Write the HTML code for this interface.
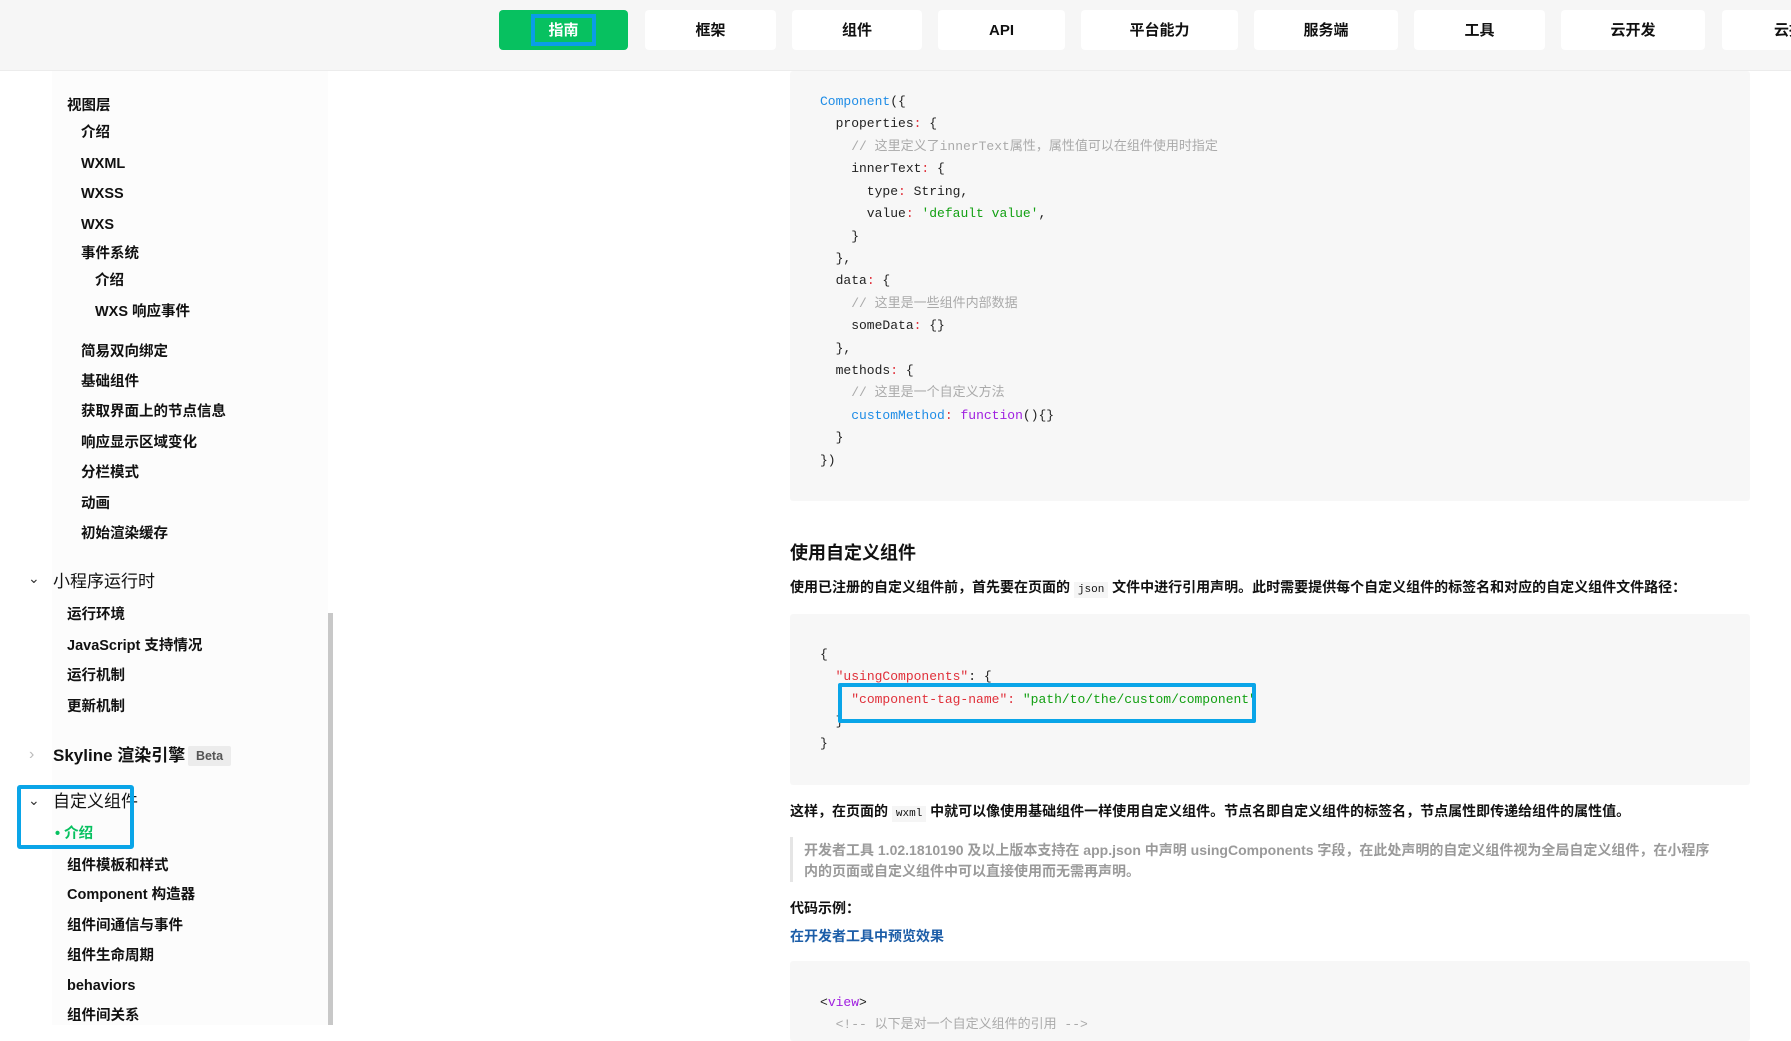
<!DOCTYPE html>
<html><head><meta charset="utf-8">
<style>
*{margin:0;padding:0;box-sizing:border-box}
body{width:1791px;height:1025px;overflow:hidden;background:#fff;font-family:"Liberation Sans","Noto Sans CJK SC",sans-serif;color:#111;position:relative}
.hdr{position:absolute;left:0;top:0;width:1791px;height:71px;background:#f6f6f6;border-bottom:1px solid #ececec}
.nb{position:absolute;top:10px;height:40px;background:#fff;border-radius:4px;font-size:15px;font-weight:bold;line-height:41px;text-align:center;color:#111}
.side{position:absolute;left:52px;top:71px;width:276px;height:954px;background:#fcfcfc}
.sb{position:absolute;left:328px;top:613px;width:5px;height:412px;background:#c8c8c8}
.it{position:absolute;height:20px;line-height:22px;font-size:14.5px;font-weight:bold;white-space:nowrap;color:#111}
.grp{position:absolute;height:24px;line-height:27px;font-size:17px;white-space:nowrap;color:#111}
.chev{position:absolute;font-size:14px;color:#333}
.code{position:absolute;left:790px;width:960px;background:#f7f7f7;border-radius:3px}
.cl{position:absolute;font-family:"Liberation Mono","Noto Sans CJK SC",monospace;font-size:13px;height:20px;line-height:22px;white-space:pre;color:#222}
.k{color:#1e8ce6}.c{color:#aaa}.s{color:#12a012}.r{color:#e0303a}.p{color:#a020e0}
.t{position:absolute;left:790px;font-size:14px;font-weight:bold;white-space:nowrap;height:20px;line-height:22px}
.ic{font-family:"Liberation Mono",monospace;font-weight:normal;font-size:11px;background:#f5f5f5;padding:2px 4px}
</style></head><body>
<div class="hdr">
<div class="nb" style="left:499px;width:129px;background:#07c160;color:#fff"><span style="display:inline-block;border:4px solid #0a9de6;width:65px;height:32px;line-height:25px;margin-top:4px">指南</span></div>
<div class="nb" style="left:645px;width:131px">框架</div>
<div class="nb" style="left:792px;width:130px">组件</div>
<div class="nb" style="left:938px;width:127px">API</div>
<div class="nb" style="left:1081px;width:157px">平台能力</div>
<div class="nb" style="left:1254px;width:144px">服务端</div>
<div class="nb" style="left:1414px;width:131px">工具</div>
<div class="nb" style="left:1561px;width:144px">云开发</div>
<div class="nb" style="left:1722px;width:100px;text-align:left;padding-left:52px">云接</div>
</div>
<div class="side"></div>
<div class="sb"></div>
<div class="it" style="left:67px;top:95px">视图层</div>
<div class="it" style="left:81px;top:122px">介绍</div>
<div class="it" style="left:81px;top:153px">WXML</div>
<div class="it" style="left:81px;top:183px">WXSS</div>
<div class="it" style="left:81px;top:214px">WXS</div>
<div class="it" style="left:81px;top:243px">事件系统</div>
<div class="it" style="left:95px;top:270px">介绍</div>
<div class="it" style="left:95px;top:301px">WXS 响应事件</div>
<div class="it" style="left:81px;top:341px">简易双向绑定</div>
<div class="it" style="left:81px;top:371px">基础组件</div>
<div class="it" style="left:81px;top:401px">获取界面上的节点信息</div>
<div class="it" style="left:81px;top:432px">响应显示区域变化</div>
<div class="it" style="left:81px;top:462px">分栏模式</div>
<div class="it" style="left:81px;top:493px">动画</div>
<div class="it" style="left:81px;top:523px">初始渲染缓存</div>
<div class="chev" style="left:28px;top:570px">&#8964;</div>
<div class="grp" style="left:53px;top:568px">小程序运行时</div>
<div class="it" style="left:67px;top:604px">运行环境</div>
<div class="it" style="left:67px;top:635px">JavaScript 支持情况</div>
<div class="it" style="left:67px;top:665px">运行机制</div>
<div class="it" style="left:67px;top:696px">更新机制</div>
<div class="chev" style="left:29px;top:746px;color:#bbb;font-size:16px">&#8250;</div>
<div class="grp" style="left:53px;top:742px;font-weight:bold">Skyline 渲染引擎</div>
<div style="position:absolute;left:188px;top:746px;width:43px;height:20px;background:#ececec;border-radius:2px;font-size:12.5px;font-weight:bold;color:#555;line-height:20px;text-align:center">Beta</div>
<div class="chev" style="left:28px;top:792px">&#8964;</div>
<div class="grp" style="left:53px;top:788px">自定义组件</div>
<div class="it" style="left:55px;top:823px;color:#07c160">• 介绍</div>
<div style="position:absolute;left:17px;top:785px;width:117px;height:64px;border:4px solid #0aa5e8;border-radius:3px"></div>
<div class="it" style="left:67px;top:855px">组件模板和样式</div>
<div class="it" style="left:67px;top:884px">Component 构造器</div>
<div class="it" style="left:67px;top:915px">组件间通信与事件</div>
<div class="it" style="left:67px;top:945px">组件生命周期</div>
<div class="it" style="left:67px;top:975px">behaviors</div>
<div class="it" style="left:67px;top:1005px">组件间关系</div>

<div class="code" style="top:71px;height:430px"></div>
<div class="cl" style="left:820px;top:91px"><span class="k">Component</span>({</div>
<div class="cl" style="left:820px;top:113px">  properties<span class="r">:</span> {</div>
<div class="cl" style="left:820px;top:136px"><span class="c">    // 这里定义了innerText属性，属性值可以在组件使用时指定</span></div>
<div class="cl" style="left:820px;top:158px">    innerText<span class="r">:</span> {</div>
<div class="cl" style="left:820px;top:181px">      type<span class="r">:</span> String,</div>
<div class="cl" style="left:820px;top:203px">      value<span class="r">:</span> <span class="s">'default value'</span>,</div>
<div class="cl" style="left:820px;top:226px">    }</div>
<div class="cl" style="left:820px;top:248px">  },</div>
<div class="cl" style="left:820px;top:270px">  data<span class="r">:</span> {</div>
<div class="cl" style="left:820px;top:293px"><span class="c">    // 这里是一些组件内部数据</span></div>
<div class="cl" style="left:820px;top:315px">    someData<span class="r">:</span> {}</div>
<div class="cl" style="left:820px;top:338px">  },</div>
<div class="cl" style="left:820px;top:360px">  methods<span class="r">:</span> {</div>
<div class="cl" style="left:820px;top:382px"><span class="c">    // 这里是一个自定义方法</span></div>
<div class="cl" style="left:820px;top:405px">    <span class="k">customMethod</span><span class="r">:</span> <span class="p">function</span>(){}</div>
<div class="cl" style="left:820px;top:427px">  }</div>
<div class="cl" style="left:820px;top:450px">})</div>

<div style="position:absolute;left:790px;top:540px;font-size:18px;font-weight:bold;line-height:26px">使用自定义组件</div>
<div class="t" style="top:576px">使用已注册的自定义组件前，首先要在页面的 <span class="ic">json</span> 文件中进行引用声明。此时需要提供每个自定义组件的标签名和对应的自定义组件文件路径：</div>

<div class="code" style="top:614px;height:171px"></div>
<div class="cl" style="left:820px;top:644px">{</div>
<div class="cl" style="left:820px;top:666px">  <span class="r">"usingComponents"</span>: {</div>
<div class="cl" style="left:820px;top:689px">    <span class="r">"component-tag-name"</span><span class="r">:</span> <span class="s">"path/to/the/custom/component"</span></div>
<div class="cl" style="left:820px;top:711px">  }</div>
<div class="cl" style="left:820px;top:733px">}</div>
<div style="position:absolute;left:838px;top:683px;width:418px;height:40px;border:4px solid #0aa5e8;border-radius:2px"></div>

<div class="t" style="top:800px">这样，在页面的 <span class="ic">wxml</span> 中就可以像使用基础组件一样使用自定义组件。节点名即自定义组件的标签名，节点属性即传递给组件的属性值。</div>
<div style="position:absolute;left:790px;top:837px;width:3px;height:45px;background:#e5e5e5"></div>
<div style="position:absolute;left:804px;top:840px;font-size:14px;font-weight:bold;color:#9a9a9a;line-height:21px;width:935px">开发者工具 1.02.1810190 及以上版本支持在 app.json 中声明 usingComponents 字段，在此处声明的自定义组件视为全局自定义组件，在小程序<br>内的页面或自定义组件中可以直接使用而无需再声明。</div>
<div class="t" style="top:897px">代码示例：</div>
<div class="t" style="top:925px;color:#1d5ea8">在开发者工具中预览效果</div>
<div class="code" style="top:961px;height:80px"></div>
<div class="cl" style="left:820px;top:992px">&lt;<span class="p">view</span>&gt;</div>
<div class="cl" style="left:820px;top:1014px"><span class="c">  &lt;!-- 以下是对一个自定义组件的引用 --&gt;</span></div>
</body></html>
